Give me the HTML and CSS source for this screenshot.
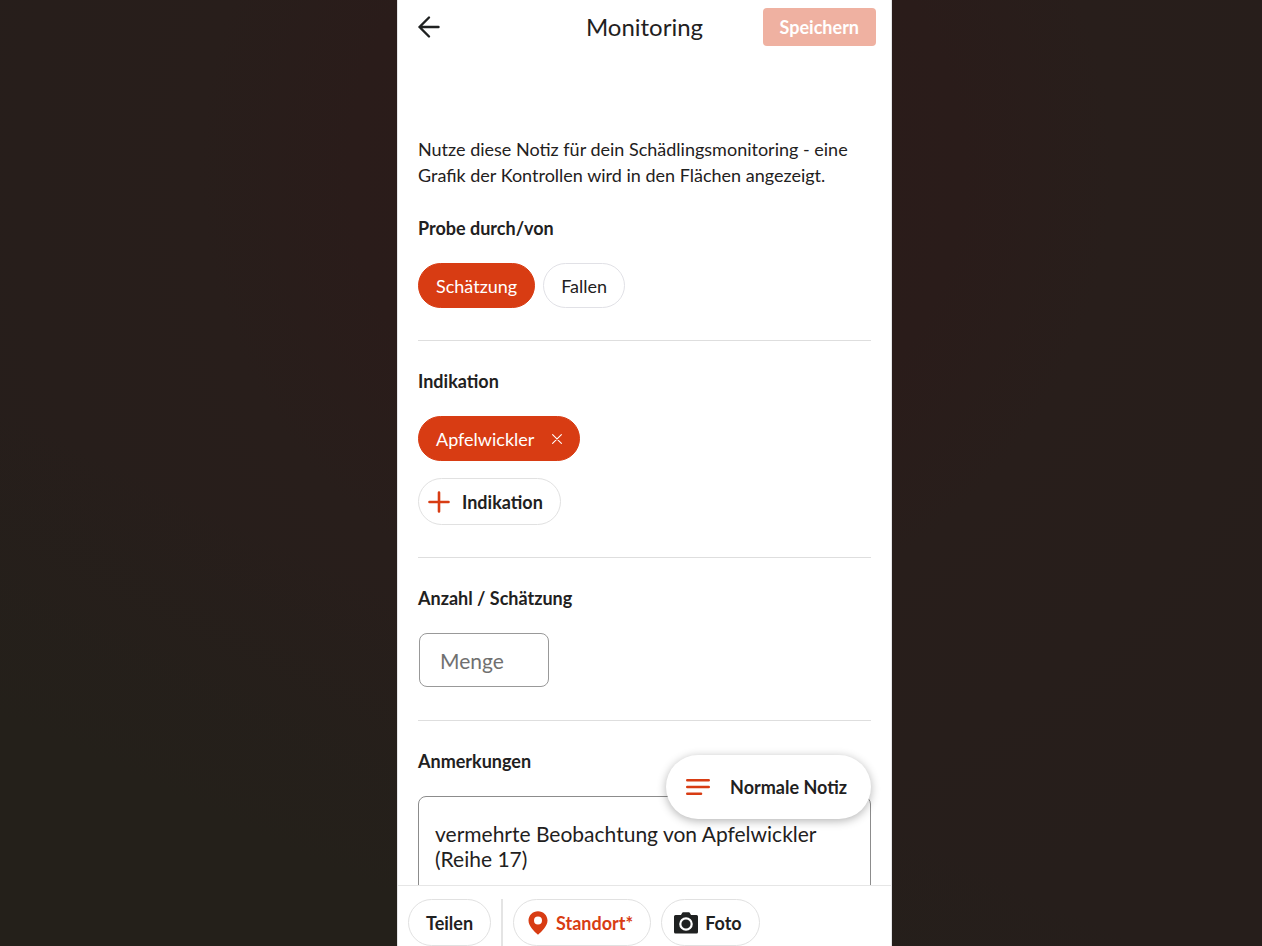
FILE: index.html
```html
<!DOCTYPE html>
<html lang="de">
<head>
    <meta charset="UTF-8">
    <meta name="viewport" content="width=device-width, initial-scale=1.0">
    <title>Monitoring</title>
    <link rel="stylesheet" href="styles.css">
</head>
<body>
    <form class="app">
        <header class="header">
            <button type="button" class="back" aria-label="Zurück">
                <svg width="24" height="24" viewBox="0 0 24 24" fill="none" stroke="currentColor" stroke-width="2.4" stroke-linecap="round" stroke-linejoin="round">
                    <path d="M21.500 12H2.500M12 2.500L2.500 12L12 21.500"/>
                </svg>
            </button>
            <h1 class="title">Monitoring</h1>
            <button type="submit" class="save">Speichern</button>
        </header>

        <main class="content">
            <section class="group intro-group">
                <p class="intro">Nutze diese Notiz für dein Schädlingsmonitoring - eine Grafik der Kontrollen wird in den Flächen angezeigt.</p>
                <h2>Probe durch/von</h2>
                <div class="chips">
                    <button type="button" class="chip active">Schätzung</button>
                    <button type="button" class="chip">Fallen</button>
                </div>
            </section>

            <section class="group">
                <h2>Indikation</h2>
                <div class="chips stacked">
                    <button type="button" class="chip active">
                        Apfelwickler
                        <svg class="remove" width="10" height="10" viewBox="0 0 10 10" stroke="currentColor" stroke-width="1.1" stroke-linecap="round">
                            <path d="M0.600 0.600L9.400 9.400M9.400 0.600L0.600 9.400"/>
                        </svg>
                    </button>
                    <button type="button" class="action add">
                        <svg class="red" width="22" height="22" viewBox="0 0 22 22" stroke="currentColor" stroke-width="2.6" stroke-linecap="round">
                            <path d="M11 1.500V20.500M1.500 11H20.500"/>
                        </svg>
                        Indikation
                    </button>
                </div>
            </section>

            <section class="group">
                <h2><label for="menge">Anzahl / Schätzung</label></h2>
                <input type="text" id="menge" class="amount" placeholder="Menge">
            </section>

            <section class="group">
                <h2><label for="notes">Anmerkungen</label></h2>
                <textarea id="notes" class="notes" rows="4">vermehrte Beobachtung von Apfelwickler (Reihe 17)</textarea>
            </section>
        </main>

        <footer class="toolbar">
            <button type="button" class="floating">
                <svg class="red" width="24" height="18" viewBox="0 0 24 18" stroke="currentColor" stroke-width="2.6" stroke-linecap="round">
                    <path d="M1.300 2.300H22.700M1.300 9H22.700M1.300 15.700H15"/>
                </svg>
                Normale Notiz
            </button>
            <button type="button" class="action">Teilen</button>
            <span class="separator"></span>
            <button type="button" class="action location red">
                <svg width="20" height="24" viewBox="0 0 20 24" fill="currentColor">
                    <path fill-rule="evenodd" d="M10 0.300C4.700 0.300 0.500 4.400 0.500 9.600C0.500 15.500 6.800 21 10 23.800C13.200 21 19.500 15.500 19.500 9.600C19.500 4.400 15.300 0.300 10 0.300ZM10 5.600A4 4 0 1 1 10 13.600A4 4 0 1 1 10 5.600Z"/>
                </svg>
                Standort*
            </button>
            <button type="button" class="action photo">
                <svg width="24" height="22" viewBox="0 0 24 22" fill="currentColor">
                    <path d="M7 3L8.100 0.900Q8.400 0.300 9.100 0.300H14.900Q15.600 0.300 15.900 0.900L17 3H22.500Q24 3 24 4.500V20Q24 21.500 22.500 21.500H1.500Q0 21.500 0 20V4.500Q0 3 1.500 3Z"/>
                    <circle cx="12" cy="12" r="5.700" fill="none" stroke="#fff" stroke-width="2.200"/>
                </svg>
                Foto
            </button>
        </footer>
    </form>
</body>
</html>
```

FILE: styles.css
```css
* {
    box-sizing: border-box;
    margin: 0;
    padding: 0;
}

body {
    display: grid;
    grid-template-columns: minmax(0, 397fr) minmax(auto, 495px) minmax(0, 370fr);
    height: 100vh;
    overflow: hidden;
    background:
        linear-gradient(25deg, #24201a 15%, transparent 35%),
        radial-gradient(circle at 52% 18%, #2c1b1a 0%, #2a1c1a 30%, #281e1b 45%, #261e1b 80%);
    color: #1f2121;
    font-family: Lato, sans-serif;
    font-size: 18px;
    line-height: 24px;
}

button, input, textarea {
    font: inherit;
    color: inherit;
}

button {
    cursor: pointer;
}

svg {
    flex: none;
}

.red {
    color: #d83c13;
}

.app {
    grid-column: 2;
    display: flex;
    flex-direction: column;
    height: 100vh;
    background: #fff;
    border: solid #e4e4e6;
    border-width: 0 1px;
}

/* header */
.header {
    display: grid;
    grid-template-columns: 1fr auto 1fr;
    align-items: center;
    padding: 8px 15px;
}

.back {
    display: flex;
    justify-self: start;
    padding: 0 4px;
    border: none;
    background: none;
}

.title {
    font-size: 24px;
    font-weight: 400;
}

.save {
    justify-self: end;
    height: 38px;
    padding: 0 17px;
    border: none;
    border-radius: 4px;
    background: #efb1a1;
    color: #fff;
    font-weight: 700;
}

/* form */
.content {
    flex: 1;
    min-height: 0;
    padding: 0 20px;
    overflow: hidden;
}

.group {
    padding: 28px 0 32px;
    border-bottom: 1px solid #dedede;
}

.intro-group {
    padding-top: 82px;
}

.intro {
    margin-bottom: 28px;
    line-height: 26px;
}

h2 {
    margin-bottom: 23px;
    font-size: 18px;
    font-weight: 700;
}

.chips {
    display: flex;
    gap: 8px;
}

.stacked {
    flex-direction: column;
    align-items: flex-start;
    gap: 17px;
}

.chip {
    display: flex;
    align-items: center;
    gap: 18px;
    height: 45px;
    padding: 0 17px;
    border: 1px solid #e1e1e6;
    border-radius: 23px;
    background: #fff;
}

.chip.active {
    border-color: #d83c13;
    background: #d83c13;
    color: #fff;
}

.action {
    display: flex;
    align-items: center;
    gap: 8px;
    height: 47px;
    padding: 0 17px;
    border: 1px solid #e1e1e1;
    border-radius: 24px;
    background: #fff;
    font-weight: 700;
}

.add {
    gap: 12px;
    padding-left: 9px;
}

.amount {
    display: block;
    width: 130px;
    height: 54px;
    margin: 1px;
    padding: 0 20px;
    border: 1px solid #999;
    border-radius: 8px;
    font-size: 21px;
}

.amount::placeholder {
    color: #707070;
}

.notes {
    display: block;
    width: 100%;
    padding: 24px 16px;
    border: 1px solid #8c8c8c;
    border-radius: 8px;
    font-size: 21px;
    line-height: 25px;
    resize: none;
}

/* bottom bar */
.toolbar {
    position: relative;
    display: flex;
    gap: 10px;
    padding: 13px 10px 0;
    border-top: 1px solid #e6e6e6;
}

.separator {
    width: 2px;
    background: #e4e4e4;
}

.location {
    padding-left: 14px;
}

.photo {
    padding-left: 12px;
    gap: 7px;
}

.floating {
    position: absolute;
    right: 20px;
    bottom: 127px;
    display: flex;
    align-items: center;
    gap: 20px;
    height: 64px;
    padding: 0 24px 0 20px;
    border: none;
    border-radius: 32px;
    background: #fff;
    box-shadow: 0 2px 10px rgba(0, 0, 0, 0.3);
    font-weight: 700;
}
```
